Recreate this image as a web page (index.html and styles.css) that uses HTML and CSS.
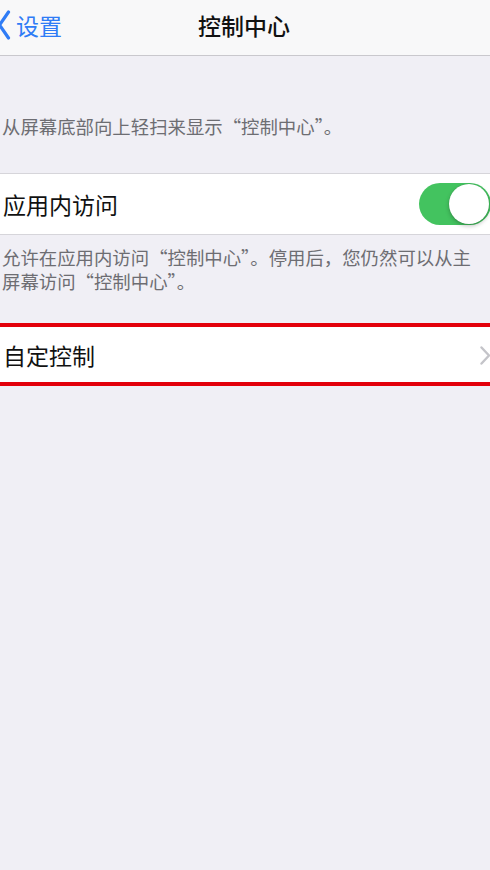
FILE: index.html
```html
<!DOCTYPE html>
<html lang="zh-CN">
<head>
  <meta charset="UTF-8">
  <meta name="viewport" content="width=device-width, initial-scale=1.0">
  <title>控制中心</title>
  <link rel="stylesheet" href="styles.css">
</head>
<body>
  <div class="nav-bar">
    <a class="back-btn" href="#">
      <svg class="back-icon" width="13" height="30" viewBox="0 0 13 30">
        <path d="M10.5 2 L1.5 15 L10.5 28" fill="none" stroke="#2f7cf6" stroke-width="3.2" stroke-linecap="round" stroke-linejoin="round"/>
      </svg>
      <span>设置</span>
    </a>
    <h1 class="nav-title">控制中心</h1>
  </div>

  <div class="group-header">从屏幕底部向上轻扫来显示“控制中心”。</div>

  <div class="cell">
    <span class="cell-label">应用内访问</span>
    <div class="switch on">
      <div class="switch-knob"></div>
    </div>
  </div>

  <div class="group-footer">
    <div>允许在应用内访问“控制中心”。停用后，您仍然可以从主</div>
    <div>屏幕访问“控制中心”。</div>
  </div>

  <div class="cell highlighted">
    <span class="cell-label">自定控制</span>
    <svg class="chevron" width="11" height="19" viewBox="0 0 11 19">
      <path d="M1.5 1.5 L9 9.5 L1.5 17.5" fill="none" stroke="#c4c4c9" stroke-width="2.4" stroke-linecap="round" stroke-linejoin="round"/>
    </svg>
  </div>
</body>
</html>
```

FILE: styles.css
```css
body {
  margin: 0;
  background-color: #f0eff5;
  font-family: "Noto Sans CJK SC", sans-serif;
  color: #111;
  height: 870px;
  overflow: hidden;
}
.nav-bar {
  position: relative;
  height: 55px;
  background-color: #f8f8f9;
  border-bottom: 1px solid #c9c8cd;
  display: flex;
  align-items: center;
  justify-content: center;
}
.back-btn {
  position: absolute;
  left: 0;
  top: 10px;
  display: flex;
  align-items: center;
  gap: 5px;
  color: #2f7cf6;
  text-decoration: none;
  font-size: 23px;
  line-height: 30px;
}
.back-icon {
  display: block;
  margin-left: -2px;
}
.nav-title {
  margin: 0;
  font-size: 23px;
  font-weight: 500;
  line-height: 30px;
  margin-top: -6px;
  margin-left: -2px;
}
.group-header {
  padding: 59px 4px 35px 2px;
  font-size: 18.4px;
  line-height: 23px;
  color: #6d6d72;
}
.group-footer {
  padding: 10px 4px 30px 2px;
  font-size: 18.4px;
  line-height: 24px;
  color: #6d6d72;
  white-space: nowrap;
}
.cell {
  height: 62px;
  box-sizing: border-box;
  background-color: #fff;
  border-top: 1px solid #d6d5da;
  border-bottom: 1px solid #d6d5da;
  display: flex;
  align-items: center;
  justify-content: space-between;
  padding-left: 3px;
}
.cell.highlighted {
  height: 63px;
  border-top: 4px solid #e3000b;
  border-bottom: 4px solid #e3000b;
  padding-top: 1px;
}
.cell-label {
  font-size: 23px;
  line-height: 30px;
}
.chevron {
  display: block;
  margin-right: -1px;
}
.switch {
  position: relative;
  width: 72px;
  height: 42px;
  border-radius: 21px;
  background-color: #43c35f;
  margin-right: -1px;
}
.switch-knob {
  position: absolute;
  top: 1px;
  right: 2px;
  width: 40px;
  height: 40px;
  border-radius: 50%;
  background-color: #fff;
  box-shadow: 0 2px 4px rgba(0, 0, 0, 0.25), 0 0 1px rgba(0, 0, 0, 0.2);
}
```
